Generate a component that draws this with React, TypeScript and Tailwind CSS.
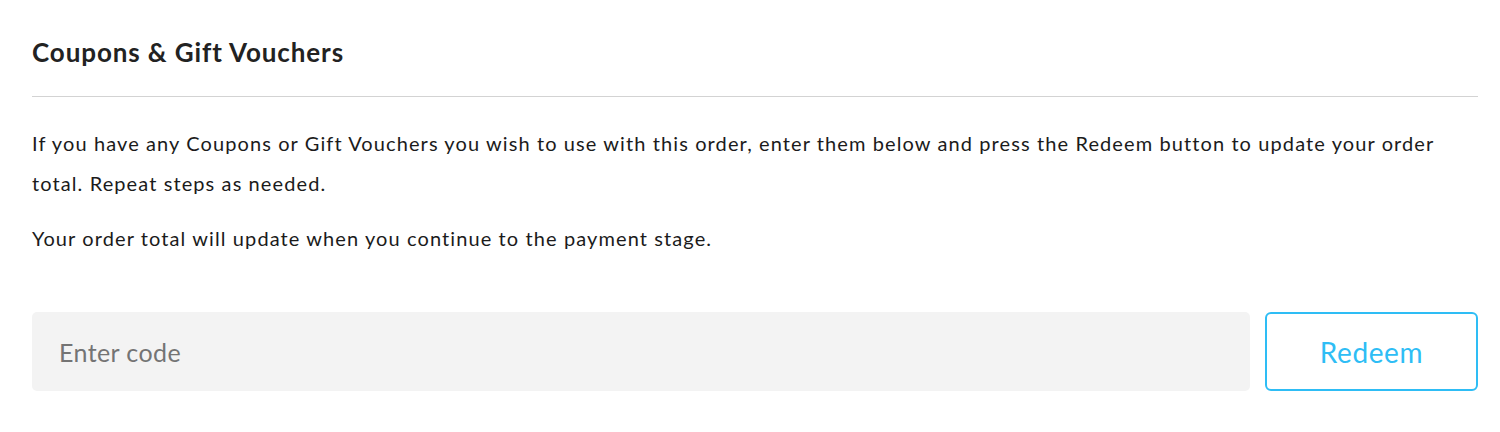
export default function App() {
  return (
    <div className="w-[1500px] h-[432px] bg-white px-[32px] pt-[36px] text-[#1b1b1b]" style={{ fontFamily: "Lato, 'Noto Sans', sans-serif" }}>
      <h2 className="text-[26px] leading-[32px] font-bold tracking-[0.9px] text-[#222]">Coupons &amp; Gift Vouchers</h2>
      <div className="mt-[28px] h-px w-[1446px] bg-[#d3d3d3]" />
      <p className="mt-[26px] w-[1446px] text-[20px] leading-[40px] tracking-[1.1px]">
        If you have any Coupons or Gift Vouchers you wish to use with this order, enter them below and press the Redeem button to update your order total. Repeat steps as needed.
      </p>
      <p className="mt-[15px] text-[20px] leading-[40px] tracking-[1.1px]">Your order total will update when you continue to the payment stage.</p>
      <div className="mt-[54px] flex w-[1446px] gap-[15px]">
        <input
          placeholder="Enter code"
          className="h-[79px] flex-1 rounded-[5px] bg-[#f3f3f3] px-[27px] text-[25px] tracking-[0.4px] text-[#333] placeholder:text-[#747474] outline-none"
          style={{ fontFamily: "Lato, 'Noto Sans', sans-serif" }}
        />
        <button
          className="h-[79px] w-[213px] rounded-[6px] border-2 border-[#2ebdf5] text-[28px] tracking-[0.6px] text-[#2ebdf5]"
          style={{ fontFamily: "Lato, 'Noto Sans', sans-serif" }}
        >
          Redeem
        </button>
      </div>
    </div>
  );
}
